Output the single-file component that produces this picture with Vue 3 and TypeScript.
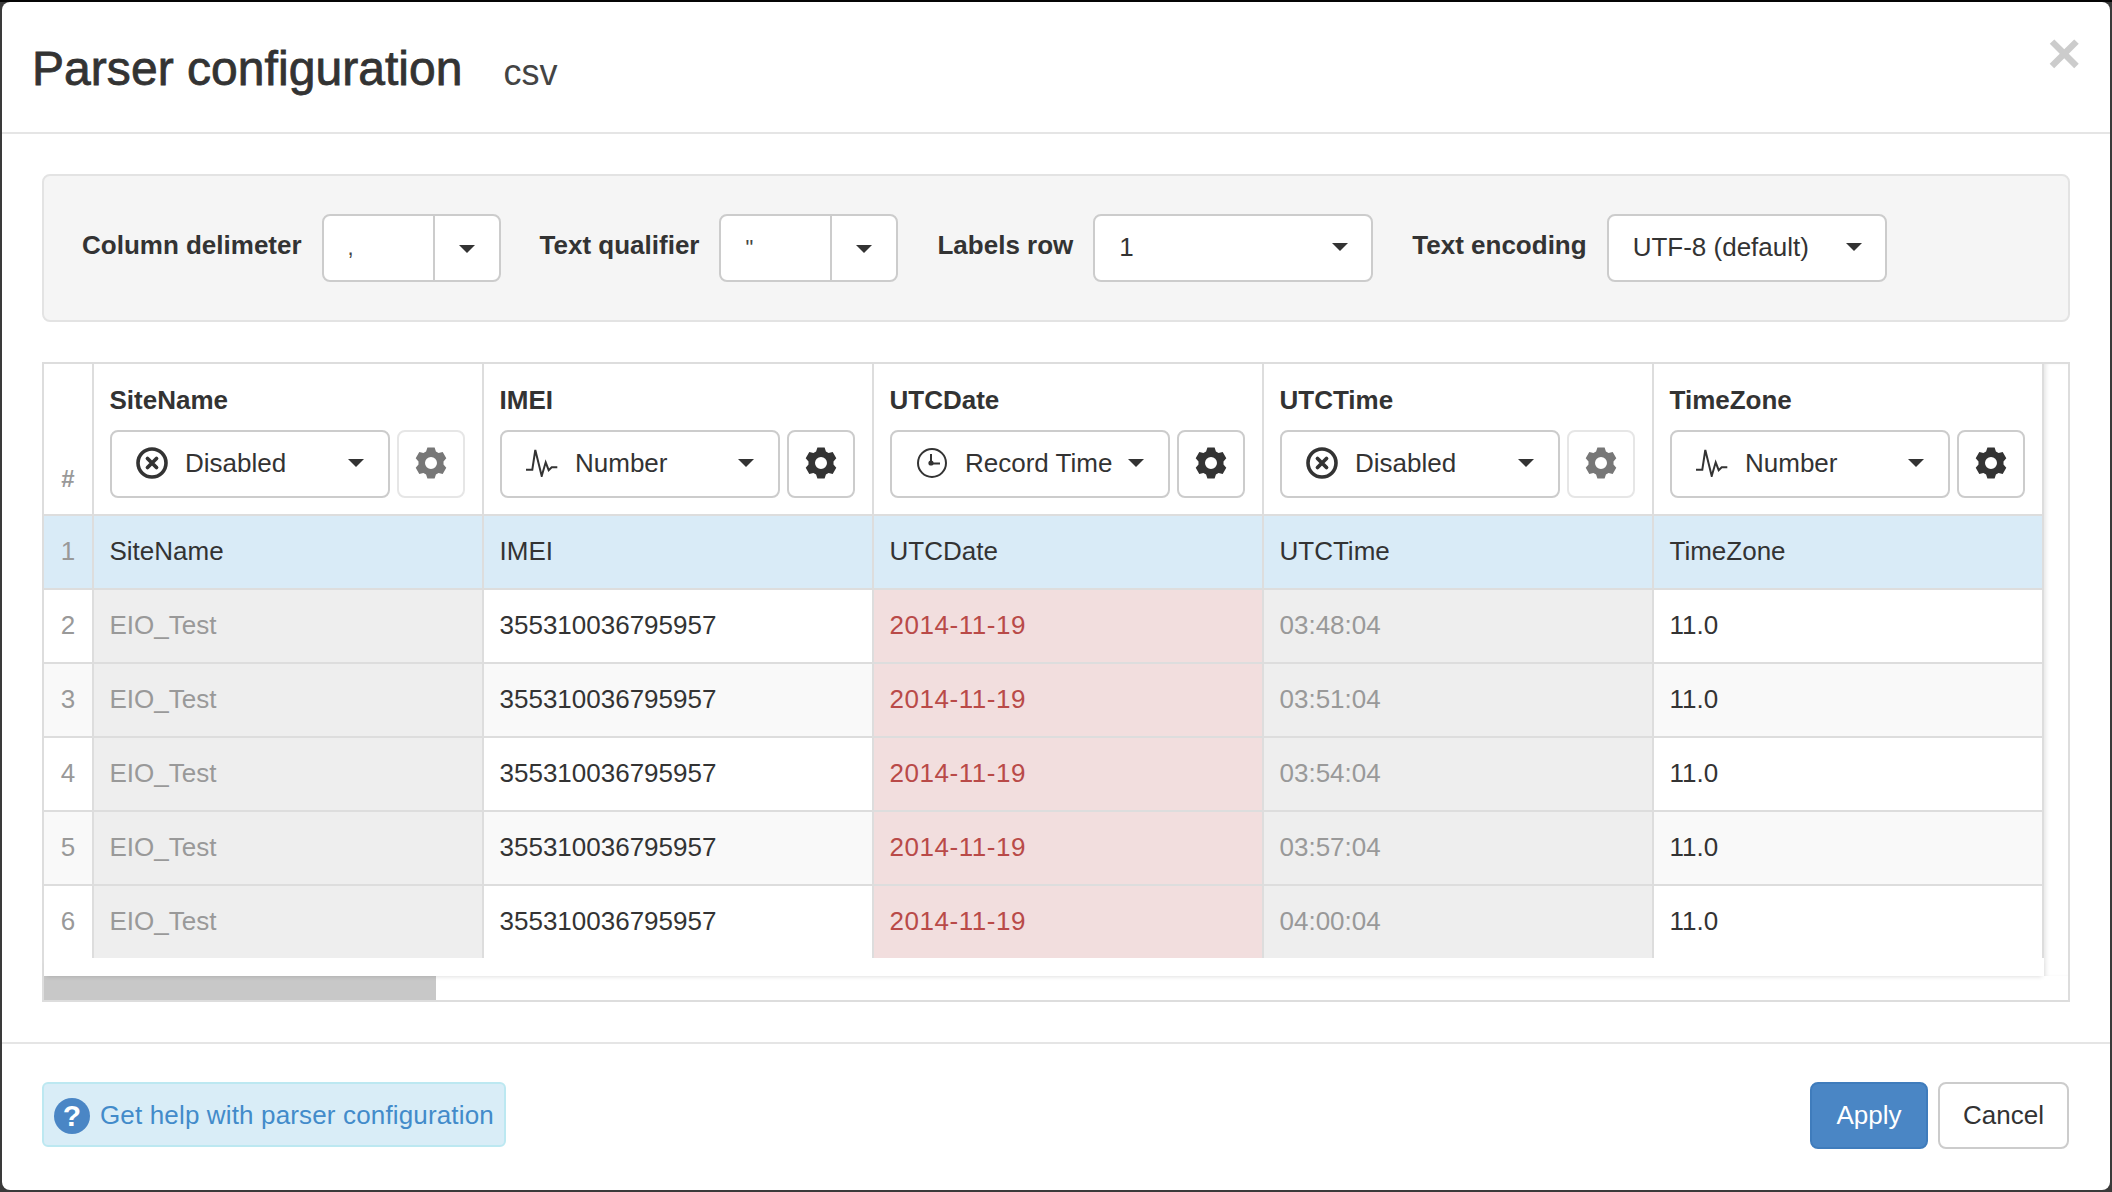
<script setup lang="ts">
type ColType = 'disabled' | 'number' | 'time'

interface Column {
  name: string
  type: ColType
  label: string
}

const columns: Column[] = [
  { name: 'SiteName', type: 'disabled', label: 'Disabled' },
  { name: 'IMEI', type: 'number', label: 'Number' },
  { name: 'UTCDate', type: 'time', label: 'Record Time' },
  { name: 'UTCTime', type: 'disabled', label: 'Disabled' },
  { name: 'TimeZone', type: 'number', label: 'Number' }
]

const rows: string[][] = [
  ['EIO_Test', '355310036795957', '2014-11-19', '03:48:04', '11.0'],
  ['EIO_Test', '355310036795957', '2014-11-19', '03:51:04', '11.0'],
  ['EIO_Test', '355310036795957', '2014-11-19', '03:54:04', '11.0'],
  ['EIO_Test', '355310036795957', '2014-11-19', '03:57:04', '11.0'],
  ['EIO_Test', '355310036795957', '2014-11-19', '04:00:04', '11.0']
]

// six-tooth cog, built around 0,0
function cogPath(): string {
  const pt = (r: number, deg: number) => {
    const a = (deg * Math.PI) / 180
    return `${(r * Math.cos(a)).toFixed(2)} ${(r * Math.sin(a)).toFixed(2)}`
  }
  const parts: string[] = []
  for (let i = 0; i < 6; i++) {
    const c = i * 60 - 90
    parts.push(pt(12.6, c - 23), pt(16, c - 13), pt(16, c + 13), pt(12.6, c + 23))
  }
  return `M${parts.join('L')}Z M6 0A6 6 0 1 0 -6 0A6 6 0 1 0 6 0Z`
}
const cog = cogPath()

function cellClass(type: ColType): string {
  if (type === 'disabled') return 'cell--off'
  if (type === 'time') return 'cell--time'
  return ''
}
</script>

<template>
  <div class="modal">
    <header class="modal__head">
      <h3 class="modal__title">Parser configuration</h3>
      <span class="modal__kind">csv</span>
      <span class="modal__close">×</span>
    </header>

    <section class="modal__body">
      <div class="well">
        <label class="well__label">Column delimeter</label>
        <div class="combo">
          <span class="combo__value">,</span>
          <span class="combo__btn"><i class="caret"></i></span>
        </div>
        <label class="well__label well__label--next">Text qualifier</label>
        <div class="combo">
          <span class="combo__value">"</span>
          <span class="combo__btn"><i class="caret"></i></span>
        </div>
        <label class="well__label well__label--next">Labels row</label>
        <div class="select">
          <span>1</span>
          <i class="caret"></i>
        </div>
        <label class="well__label well__label--next">Text encoding</label>
        <div class="select">
          <span>UTF-8 (default)</span>
          <i class="caret"></i>
        </div>
      </div>

      <div class="sheet">
        <div class="sheet__main">
          <div class="sheet__view">
            <table class="grid">
              <colgroup>
                <col class="grid__idx" />
                <col v-for="c in columns" :key="c.name" class="grid__col" />
              </colgroup>
              <thead>
                <tr>
                  <th class="idx idx--head">#</th>
                  <th v-for="c in columns" :key="c.name">
                    <div class="col-name">{{ c.name }}</div>
                    <div class="col-tools">
                      <div class="type-btn">
                        <span class="type-btn__icon">
                          <svg v-if="c.type === 'disabled'" width="32" height="32" viewBox="0 0 32 32">
                            <circle cx="16" cy="16" r="14" fill="none" stroke="#333" stroke-width="3.6" />
                            <path d="M11.5 11.5l9 9M20.5 11.5l-9 9" stroke="#333" stroke-width="3.8" stroke-linecap="round" />
                          </svg>
                          <svg v-else-if="c.type === 'number'" width="32" height="28" viewBox="0 0 32 28">
                            <path d="M0 20.7H6.3L9.3 1L15.7 27L19.7 13.3L22.7 21.2L25.7 18.3H31.3" fill="none" stroke="#333" stroke-width="2" />
                          </svg>
                          <svg v-else width="32" height="32" viewBox="0 0 32 32">
                            <circle cx="16" cy="16" r="14" fill="none" stroke="#333" stroke-width="2" />
                            <path d="M15 7V16.5H24" fill="none" stroke="#333" stroke-width="2" />
                            <circle cx="15" cy="16" r="2.6" fill="#333" />
                          </svg>
                        </span>
                        <span class="type-btn__label">{{ c.label }}</span>
                        <i class="caret"></i>
                      </div>
                      <div class="cog-btn" :class="{ 'cog-btn--off': c.type === 'disabled' }">
                        <svg width="32" height="32" viewBox="-16 -16 32 32">
                          <path :d="cog" fill="currentColor" fill-rule="evenodd" />
                        </svg>
                      </div>
                    </div>
                  </th>
                </tr>
              </thead>
              <tbody>
                <tr class="row--labels">
                  <td class="idx">1</td>
                  <td v-for="c in columns" :key="c.name">{{ c.name }}</td>
                </tr>
                <tr v-for="(row, i) in rows" :key="i" :class="{ 'row--odd': i % 2 === 1 }">
                  <td class="idx">{{ i + 2 }}</td>
                  <td v-for="(val, j) in row" :key="j" :class="cellClass(columns[j].type)">{{ val }}</td>
                </tr>
              </tbody>
            </table>
          </div>
          <div class="sheet__gap"></div>
          <div class="sheet__hbar"><div class="sheet__thumb"></div></div>
        </div>
        <div class="sheet__vbar"></div>
      </div>
    </section>

    <footer class="modal__foot">
      <div class="help">
        <span class="help__icon">?</span>
        <span class="help__text">Get help with parser configuration</span>
      </div>
      <div class="actions">
        <button class="btn btn--primary">Apply</button>
        <button class="btn">Cancel</button>
      </div>
    </footer>
  </div>
</template>

<style>
html,
body {
  height: 100%;
  overflow: hidden;
}
body {
  background: linear-gradient(#050505 2px, #3a3a3a 2px);
}
</style>

<style scoped>
.modal {
  box-sizing: border-box;
  margin: 2px;
  width: 2108px;
  height: 1188px;
  background: #fff;
  border-radius: 8px;
  display: flex;
  flex-direction: column;
  font-family: 'Liberation Sans', Arial, sans-serif;
  font-size: 26px;
  color: #333;
}

.modal__head {
  box-sizing: border-box;
  height: 132px;
  flex-shrink: 0;
  display: flex;
  align-items: flex-start;
  padding: 0 29px 0 30px;
  border-bottom: 2px solid #e5e5e5;
}

.modal__title {
  margin: 38px 0 0;
  font-size: 48px;
  line-height: 58px;
  font-weight: 400;
  letter-spacing: 0.05px;
  -webkit-text-stroke: 0.8px #333;
}

.modal__kind {
  margin: 50px 0 0 41px;
  font-size: 36px;
  line-height: 42px;
  color: #444;
}

.modal__close {
  margin: 22px 0 0 auto;
  font-size: 58px;
  line-height: 58px;
  font-weight: 700;
  color: #ccc;
}

.modal__body {
  flex: 1;
  padding: 40px 40px 40px;
  display: flex;
  flex-direction: column;
  gap: 40px;
}

.well {
  box-sizing: border-box;
  height: 148px;
  display: flex;
  align-items: center;
  padding-left: 38px;
  background: #f5f5f5;
  border: 2px solid #e3e3e3;
  border-radius: 8px;
}

.well__label {
  font-weight: 700;
  margin: 0 20px 6px 0;
  white-space: nowrap;
}

.well__label--next {
  margin-left: 39px;
}

.combo {
  box-sizing: border-box;
  width: 179px;
  height: 68px;
  display: flex;
  background: #fff;
  border: 2px solid #ccc;
  border-radius: 8px;
}

.combo__value {
  box-sizing: border-box;
  width: 111px;
  padding-left: 24px;
  line-height: 64px;
  font-size: 22px;
  border-right: 2px solid #ccc;
  color: #444;
}

.combo__btn {
  flex: 1;
  display: flex;
  align-items: center;
  justify-content: center;
  padding-top: 2px;
}

.select {
  box-sizing: border-box;
  width: 280px;
  height: 68px;
  display: flex;
  align-items: center;
  justify-content: space-between;
  padding: 0 23px 2px 24px;
  background: #fff;
  border: 2px solid #ccc;
  border-radius: 8px;
}

.caret {
  display: block;
  flex-shrink: 0;
  width: 0;
  height: 0;
  border-top: 8px solid #333;
  border-left: 8px solid transparent;
  border-right: 8px solid transparent;
}

.sheet {
  box-sizing: border-box;
  height: 640px;
  display: flex;
  border: 2px solid #ddd;
}

.sheet__main {
  width: 2000px;
  display: flex;
  flex-direction: column;
}

.sheet__view {
  height: 594px;
  overflow: hidden;
}

.sheet__gap {
  height: 18px;
  box-shadow: 0 3px 4px -2px rgba(0, 0, 0, 0.12);
  position: relative;
}

.sheet__hbar {
  height: 24px;
}

.sheet__thumb {
  width: 392px;
  height: 100%;
  background: #c8c8c8;
}

.sheet__vbar {
  flex: 1;
  height: 612px;
  box-shadow: inset 4px 0 4px -2px rgba(0, 0, 0, 0.1);
}

.grid {
  table-layout: fixed;
  width: 2000px;
  border-collapse: separate;
  border-spacing: 0;
}

.grid__idx {
  width: 50px;
}

.grid__col {
  width: 390px;
}

th,
td {
  box-sizing: border-box;
  border-right: 2px solid #ddd;
  border-bottom: 2px solid #ddd;
  text-align: left;
  white-space: nowrap;
}

th {
  height: 152px;
  padding: 0 0 0 16px;
  vertical-align: top;
}

td {
  height: 74px;
  padding: 0 0 2px 15.5px;
  vertical-align: middle;
}

.idx {
  padding: 0 0 2px;
  text-align: center;
  color: #999;
  font-weight: 400;
}

.idx--head {
  vertical-align: bottom;
  font-weight: 700;
  font-size: 24px;
  padding-bottom: 21px;
  color: #999;
}

.col-name {
  margin: 18px 0 0 -0.5px;
  line-height: 36px;
  font-weight: 700;
}

.col-tools {
  display: flex;
  gap: 7px;
  margin-top: 12px;
  font-weight: 400;
}

.type-btn {
  box-sizing: border-box;
  width: 280px;
  height: 68px;
  display: flex;
  align-items: center;
  padding: 0 24px 2px;
  border: 2px solid #ccc;
  border-radius: 8px;
}

.type-btn__icon {
  width: 32px;
  display: flex;
  align-items: center;
  justify-content: center;
  flex-shrink: 0;
}

.type-btn__label {
  flex: 1;
  margin-left: 17px;
}

.cog-btn {
  box-sizing: border-box;
  width: 68px;
  height: 68px;
  display: flex;
  align-items: center;
  justify-content: center;
  padding-bottom: 2px;
  border: 2px solid #ccc;
  border-radius: 8px;
  color: #333;
}

.cog-btn--off {
  border-color: #e6e6e6;
  color: #777;
}

.row--labels td {
  background: #d9ebf7;
}

.row--odd td {
  background: #f9f9f9;
}

td.cell--off,
.row--odd td.cell--off {
  background: #eee;
  color: #999;
}

td.cell--time,
.row--odd td.cell--time {
  background: #f2dede;
  color: #b94a48;
  letter-spacing: 0.55px;
}

.modal__foot {
  box-sizing: border-box;
  border-top: 2px solid #e5e5e5;
  flex: 1;
  display: flex;
  justify-content: space-between;
  align-items: flex-start;
  padding: 38px 41px 0 40px;
}

.help {
  box-sizing: border-box;
  width: 464px;
  height: 65px;
  display: flex;
  align-items: center;
  gap: 10px;
  padding-left: 10px;
  background: #d9edf7;
  border: 2px solid #bce8f1;
  border-radius: 6px;
  color: #428bca;
  white-space: nowrap;
}

.help__icon {
  width: 36px;
  height: 36px;
  flex-shrink: 0;
  margin-top: 3px;
  border-radius: 50%;
  background: #4a86c5;
  color: #fff;
  font-size: 30px;
  font-weight: 700;
  line-height: 36px;
  text-align: center;
}

.help__text {
  margin-top: 2px;
  letter-spacing: 0.15px;
}

.actions {
  display: flex;
  gap: 10px;
}

.btn {
  box-sizing: border-box;
  height: 67px;
  width: 131px;
  padding: 0;
  font: inherit;
  color: #333;
  background: #fff;
  border: 2px solid #ccc;
  border-radius: 8px;
}

.btn--primary {
  width: 118px;
  color: #fff;
  background: #4a86c5;
  border-color: #3f7cbc;
}
</style>
